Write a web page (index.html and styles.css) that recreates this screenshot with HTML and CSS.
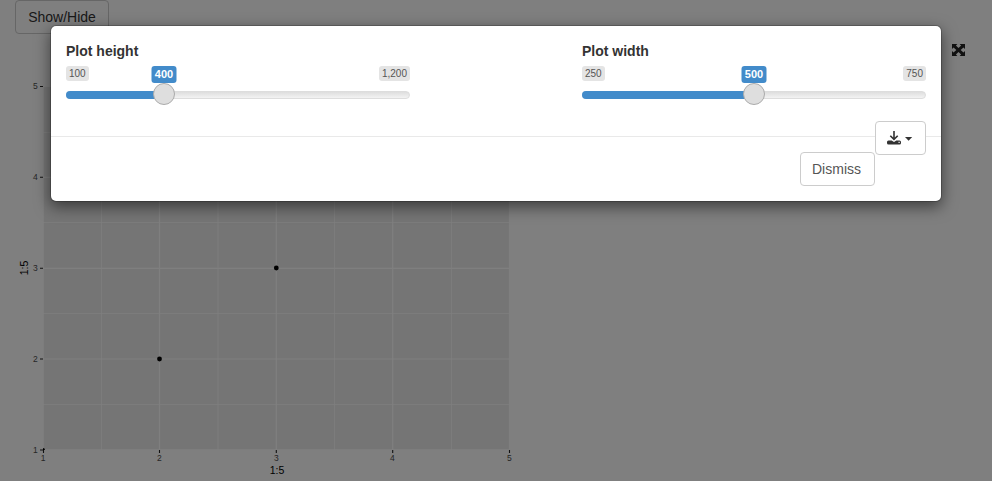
FILE: index.html
```html
<!DOCTYPE html>
<html lang="en">
<head>
<meta charset="utf-8">
<title>Plot</title>
<link rel="stylesheet" href="styles.css">
</head>
<body>
<main class="page">
  <button class="btn toggle">Show/Hide</button>
  <div class="stage">
    <svg class="plot" width="500" height="447" viewBox="15 34 500 447">
      <rect x="43.500" y="86" width="466" height="363.500" fill="#ebebeb"/>
      <path class="grid minor" d="M101.500 86V450M218 86V450M334.500 86V450M451.500 86V450M43 132.500H509.500M43 222.500H509.500M43 313.500H509.500M43 404.500H509.500"/>
      <path class="grid" d="M43 86V450M159.500 86V450M276.300 86V450M392.700 86V450M509.500 86V450M43 86.500H509.500M43 177.300H509.500M43 268.300H509.500M43 359H509.500M43 450H509.500"/>
      <path class="ticks" d="M40 86.500H43M40 177.300H43M40 268.300H43M40 359H43M40 450H43M43.500 450V453M159.500 450V453M276.300 450V453M392.700 450V453M509.500 450V453"/>
      <circle cx="159.500" cy="359" r="2.400"/>
      <circle cx="276.300" cy="268" r="2.400"/>
      <path d="M43 448a2.200 2.200 0 0 1 2 2h-2z"/>
      <g class="num" text-anchor="end">
        <text x="37.800" y="89">5</text>
        <text x="37.800" y="180">4</text>
        <text x="37.800" y="271">3</text>
        <text x="37.800" y="362">2</text>
        <text x="37.800" y="453">1</text>
      </g>
      <g class="num" text-anchor="middle">
        <text x="43" y="461">1</text>
        <text x="159.300" y="461">2</text>
        <text x="276.300" y="461">3</text>
        <text x="392.300" y="461">4</text>
        <text x="509.300" y="461">5</text>
      </g>
      <text class="axis" text-anchor="middle" x="277" y="474">1:5</text>
      <text class="axis" text-anchor="middle" transform="translate(28 268) rotate(-90)">1:5</text>
    </svg>
    <svg class="expand" width="13" height="12" viewBox="0 0 12 12" preserveAspectRatio="none">
      <path d="M0 0H5L3.600 1.400L6 4L8.400 1.400L7 0H12V5L10.600 3.600L8 6L10.600 8.400L12 7V12H7L8.400 10.600L6 8L3.600 10.600L5 12H0V7L1.400 8.400L4 6L1.400 3.600L0 5z"/>
    </svg>
  </div>
</main>
<div class="backdrop"></div>
<section class="modal">
  <div class="modal-body">
    <div class="field">
      <div class="label">Plot height</div>
      <div class="values"><span class="tag">100</span><span class="tag">1,200</span><span class="current height-pos">400</span></div>
      <div class="track"><div class="bar height-bar"></div><div class="handle height-pos"></div></div>
    </div>
    <div class="field">
      <div class="label">Plot width</div>
      <div class="values"><span class="tag">250</span><span class="tag">750</span><span class="current width-pos">500</span></div>
      <div class="track"><div class="bar width-bar"></div><div class="handle width-pos"></div></div>
    </div>
  </div>
  <div class="modal-footer">
    <button class="btn dismiss">Dismiss</button>
    <button class="btn download">
      <svg width="26" height="14" viewBox="0 0 26 14">
        <path d="M7 0V8M3.300 4.700L7 8.300L10.700 4.700" fill="none" stroke="#333" stroke-width="1.600"/>
        <path fill="#333" fill-rule="evenodd" d="M1.500 9.500H4.700L7 11L9.300 9.500H12.500Q14 9.500 14 11V12Q14 13.500 12.500 13.500H1.500Q0 13.500 0 12V11Q0 9.500 1.500 9.500zM11.500 10.800V12H12.700V10.800z"/>
        <path fill="#333" d="M18 6H25.200L21.600 9.800z"/>
      </svg>
    </button>
  </div>
</section>
</body>
</html>
```
FILE: styles.css
```css
* { box-sizing: border-box; }
body {
  margin: 0;
  height: 481px;
  overflow: hidden;
  background: #fff;
  color: #333;
  font: 14px/20px "Liberation Sans", Arial, sans-serif;
}
.page { padding: 0 15px; }
.btn {
  height: 34px;
  padding: 0 12px;
  border: 1px solid #ccc;
  border-radius: 4px;
  background: #fff;
  color: #333;
  font: inherit;
}
.toggle { display: block; width: 94px; }
.stage { display: flex; justify-content: space-between; }
.plot { display: block; }
.expand { margin: 10px 12px 0 0; fill: #222; }
.grid { fill: none; stroke: #fff; stroke-width: 1.2; }
.minor { stroke-width: .7; }
.ticks { fill: none; stroke: #222; stroke-width: 1.1; }
.num { font-size: 8.5px; fill: #4d4d4d; }
.axis { font-size: 10.5px; fill: #000; }
.backdrop { position: absolute; inset: 0; background: rgba(0, 0, 0, .5); }
.modal {
  position: absolute;
  left: 50px;
  top: 25px;
  width: 892px;
  height: 177px;
  border: 1px solid rgba(0, 0, 0, .2);
  border-radius: 6px;
  background: #fff;
  background-clip: padding-box;
  box-shadow: 0 5px 15px rgba(0, 0, 0, .5);
}
.modal-body {
  display: flex;
  justify-content: space-between;
  height: 110px;
  padding: 15px 15px 0;
}
.field { width: 344px; }
.label { font-weight: bold; height: 25px; }
.values { position: relative; display: flex; justify-content: space-between; height: 25px; }
.tag {
  height: 15px;
  padding: 0 3px;
  border-radius: 3px;
  background: #e4e4e4;
  color: #555;
  font-size: 10px;
  line-height: 16px;
}
.current {
  position: absolute;
  top: 0;
  transform: translateX(-50%);
  width: 25px;
  height: 17px;
  border-radius: 3px;
  background: #428bca;
  color: #fff;
  font-size: 11px;
  font-weight: bold;
  line-height: 17px;
  text-align: center;
}
.track {
  position: relative;
  height: 8px;
  border: 1px solid #ddd;
  border-radius: 8px;
  background: linear-gradient(#dedede, #f3f3f3);
}
.bar { height: 8px; margin: -1px; border-radius: 8px 0 0 8px; background: #428bca; }
.height-bar { width: 98px; }
.width-bar { width: 172px; }
.handle {
  position: absolute;
  top: -9px;
  width: 22px;
  height: 22px;
  margin-left: -1px;
  transform: translateX(-50%);
  border: 1px solid #ababab;
  border-radius: 50%;
  background: #dedede;
}
.height-pos { left: 98px; }
.width-pos { left: 172px; }
.modal-footer {
  display: flex;
  justify-content: flex-end;
  height: 65px;
  padding: 15px 15px 0;
  border-top: 1px solid #e9e9e9;
}
.dismiss { width: 75px; padding: 0 13px 0 11px; color: #555; }
.download { width: 51px; margin-top: -31px; padding-left: 11px; }
.download svg { display: block; }
```
